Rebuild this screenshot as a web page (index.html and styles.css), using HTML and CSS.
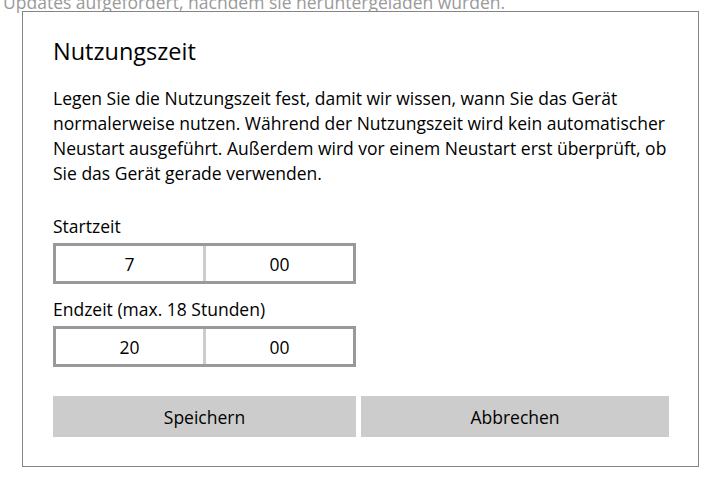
FILE: index.html
```html
<!DOCTYPE html>
<html lang="de">
<head>
    <meta charset="UTF-8">
    <meta name="viewport" content="width=device-width, initial-scale=1.0">
    <title>Nutzungszeit</title>
    <link rel="stylesheet" href="styles.css">
</head>
<body>
    <p class="behind">Updates aufgefordert, nachdem sie heruntergeladen wurden.</p>

    <div class="dialog">
        <h1>Nutzungszeit</h1>
        <p class="info">
            Legen Sie die Nutzungszeit fest, damit wir wissen, wann Sie das Gerät<br>
            normalerweise nutzen. Während der Nutzungszeit wird kein automatischer<br>
            Neustart ausgeführt. Außerdem wird vor einem Neustart erst überprüft, ob<br>
            Sie das Gerät gerade verwenden.
        </p>

        <label class="field-label">Startzeit</label>
        <div class="time-picker">
            <span class="time-part">7</span>
            <span class="time-part">00</span>
        </div>

        <label class="field-label second">Endzeit (max. 18 Stunden)</label>
        <div class="time-picker">
            <span class="time-part">20</span>
            <span class="time-part">00</span>
        </div>

        <div class="actions">
            <button class="btn btn-save">Speichern</button>
            <button class="btn btn-cancel">Abbrechen</button>
        </div>
    </div>
</body>
</html>
```

FILE: styles.css
```css
body {
    margin: 0;
    background-color: #fff;
    font-family: "Open Sans", "Noto Sans", sans-serif;
    color: #000;
    overflow: hidden;
}

.behind {
    margin: -6px 0 0 3px;
    height: 17px;
    font-size: 17.5px;
    line-height: 17px;
    color: #9a9a9a;
    white-space: nowrap;
}

.dialog {
    position: relative;
    margin-top: 0;
    margin-left: 22px;
    width: 677px;
    height: 456px;
    box-sizing: border-box;
    border: 1px solid #858585;
    background-color: #fff;
    padding: 24px 29px 0 30px;
}

h1 {
    margin: 0;
    font-size: 23.5px;
    font-weight: normal;
    line-height: 30px;
}

.info {
    margin: 20px 0 0 0;
    font-size: 17.5px;
    line-height: 25px;
    white-space: nowrap;
}

.field-label {
    display: block;
    margin-top: 28px;
    margin-bottom: 5px;
    font-size: 17.5px;
    line-height: 24px;
}

.field-label.second {
    margin-top: 13px;
}

.time-picker {
    display: flex;
    width: 303px;
    height: 41px;
    box-sizing: border-box;
    border: 3px solid #999;
}

.time-part {
    flex: 1;
    display: flex;
    align-items: center;
    justify-content: center;
    font-size: 17.5px;
}

.time-part + .time-part {
    border-left: 3px solid #ccc;
}

.actions {
    display: flex;
    gap: 5px;
    margin-top: 29px;
}

.btn {
    height: 41px;
    border: none;
    background-color: #ccc;
    font-family: inherit;
    font-size: 17.5px;
    color: #000;
    padding: 0;
}

.btn-save {
    width: 303px;
}

.btn-cancel {
    width: 308px;
}
```
